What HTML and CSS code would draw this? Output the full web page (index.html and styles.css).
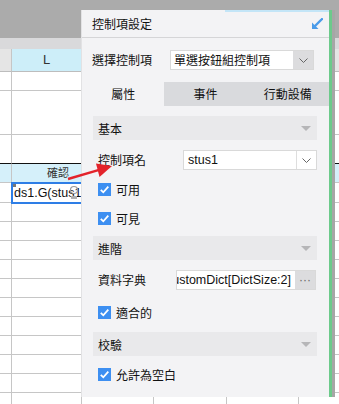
FILE: index.html
```html
<!doctype html>
<html lang="zh-Hant">
<head>
  <meta charset="utf-8">
  <title>控制項設定</title>
  <link rel="stylesheet" href="styles.css">
</head>
<body>

  <div class="sheet">
    <div class="topbar"></div>
    <div class="strip"></div>
    <div class="row head">
      <div class="cell rh"></div><div class="cell l">L</div><div class="cell"></div><div class="cell w73"></div><div class="cell"></div><div class="cell"></div>
    </div>
    <div class="row"><div class="cell rh"></div><div class="cell l"></div><div class="cell"></div><div class="cell w73"></div><div class="cell"></div><div class="cell"></div></div>
    <div class="row tall"><div class="cell rh"></div><div class="cell l"></div><div class="cell"></div><div class="cell w73"></div><div class="cell"></div><div class="cell"></div></div>
    <div class="row mid dark"><div class="cell rh"></div><div class="cell l"></div><div class="cell"></div><div class="cell w73"></div><div class="cell"></div><div class="cell"></div></div>
    <div class="row caption"><div class="cell rh"></div><div class="cell l">確認</div><div class="cell"></div><div class="cell w73"></div><div class="cell"></div><div class="cell"></div></div>
    <div class="row current">
      <div class="cell rh"></div>
      <div class="cell l">
        <div class="editor">
          <span class="pen"></span>
          <span class="formula">ds1.G(stus1</span>
          <svg class="mark" width="10" height="16" viewBox="0 0 10 16">
            <circle cx="5" cy="5" r="3.5" fill="none" stroke="#9a9a9a" stroke-width="1.2"/>
            <rect x="2" y="11" width="6" height="3" fill="#b0b0b0"/>
          </svg>
        </div>
      </div>
      <div class="cell"></div><div class="cell w73"></div><div class="cell"></div><div class="cell"></div>
    </div>
    <div class="row"><div class="cell rh"></div><div class="cell l"></div><div class="cell"></div><div class="cell w73"></div><div class="cell"></div><div class="cell"></div></div>
    <div class="row"><div class="cell rh"></div><div class="cell l"></div><div class="cell"></div><div class="cell w73"></div><div class="cell"></div><div class="cell"></div></div>
    <div class="row"><div class="cell rh"></div><div class="cell l"></div><div class="cell"></div><div class="cell w73"></div><div class="cell"></div><div class="cell"></div></div>
    <div class="row"><div class="cell rh"></div><div class="cell l"></div><div class="cell"></div><div class="cell w73"></div><div class="cell"></div><div class="cell"></div></div>
    <div class="row"><div class="cell rh"></div><div class="cell l"></div><div class="cell"></div><div class="cell w73"></div><div class="cell"></div><div class="cell"></div></div>
    <div class="row"><div class="cell rh"></div><div class="cell l"></div><div class="cell"></div><div class="cell w73"></div><div class="cell"></div><div class="cell"></div></div>
    <div class="row"><div class="cell rh"></div><div class="cell l"></div><div class="cell"></div><div class="cell w73"></div><div class="cell"></div><div class="cell"></div></div>
    <div class="row"><div class="cell rh"></div><div class="cell l"></div><div class="cell"></div><div class="cell w73"></div><div class="cell"></div><div class="cell"></div></div>
    <div class="row"><div class="cell rh"></div><div class="cell l"></div><div class="cell"></div><div class="cell w73"></div><div class="cell"></div><div class="cell"></div></div>
    <div class="row"><div class="cell rh"></div><div class="cell l"></div><div class="cell"></div><div class="cell w73"></div><div class="cell"></div><div class="cell"></div></div>
    <div class="row"><div class="cell rh"></div><div class="cell l"></div><div class="cell"></div><div class="cell w73"></div><div class="cell"></div><div class="cell"></div></div>
  </div>

  <div class="panel">
    <div class="title">
      <span>控制項設定</span>
      <svg class="dock" width="12" height="12" viewBox="0 0 12 12">
        <path d="M11 1 L4 8" stroke="#4a9be9" stroke-width="2.4" stroke-linecap="round"/>
        <polygon points="1,11 1,4.5 7.5,11" fill="#4a9be9"/>
      </svg>
    </div>

    <div class="pick">
      <span class="pick-label">選擇控制項</span>
      <div class="select">
        <span class="val">單選按鈕組控制項</span>
        <span class="btn grey">
          <svg width="9" height="5" viewBox="0 0 9 5"><path d="M0.5 0.5 L4.5 4.5 L8.5 0.5" fill="none" stroke="#666" stroke-width="1"/></svg>
        </span>
      </div>
    </div>

    <div class="tabs">
      <div class="tab on">屬性</div>
      <div class="tab">事件</div>
      <div class="tab">行動設備</div>
    </div>

    <div class="props">
      <div class="group">基本<i class="caret"></i></div>

      <div class="field">
        <span class="flabel wide">控制項名</span>
        <div class="input">
          <span class="val">stus1</span>
          <span class="btn white">
            <svg width="9" height="5" viewBox="0 0 9 5"><path d="M0.5 0.5 L4.5 4.5 L8.5 0.5" fill="none" stroke="#666" stroke-width="1"/></svg>
          </span>
        </div>
      </div>

      <div class="check first"><span class="box"><svg width="13" height="13" viewBox="0 0 13 13"><path d="M2.8 6.8 L5.3 9.3 L10.3 3.6" fill="none" stroke="#fff" stroke-width="1.8"/></svg></span>可用</div>
      <div class="check next"><span class="box"><svg width="13" height="13" viewBox="0 0 13 13"><path d="M2.8 6.8 L5.3 9.3 L10.3 3.6" fill="none" stroke="#fff" stroke-width="1.8"/></svg></span>可見</div>

      <div class="group after-check">進階<i class="caret"></i></div>

      <div class="field">
        <span class="flabel">資料字典</span>
        <div class="input dict">
          <span class="val scrolled"><span>CustomDict[DictSize:2]</span></span>
          <span class="btn grey dots">···</span>
        </div>
      </div>

      <div class="check next"><span class="box"><svg width="13" height="13" viewBox="0 0 13 13"><path d="M2.8 6.8 L5.3 9.3 L10.3 3.6" fill="none" stroke="#fff" stroke-width="1.8"/></svg></span>適合的</div>

      <div class="group after-check2">校驗<i class="caret"></i></div>

      <div class="check last"><span class="box"><svg width="13" height="13" viewBox="0 0 13 13"><path d="M2.8 6.8 L5.3 9.3 L10.3 3.6" fill="none" stroke="#fff" stroke-width="1.8"/></svg></span>允許為空白</div>
    </div>
  </div>

  <svg class="pointer" width="339" height="404" viewBox="0 0 339 404">
    <line x1="68" y1="179" x2="100" y2="169.6" stroke="#e3232b" stroke-width="2.4"/>
    <polygon points="112,166 96,163.5 99.5,177" fill="#e3232b"/>
  </svg>

</body>
</html>
```

FILE: styles.css
```css
* {
  box-sizing: border-box;
}
body {
  margin: 0;
  width: 339px;
  height: 404px;
  overflow: hidden;
  position: relative;
  background: #fff;
  color: #111;
  font-family: "Liberation Sans", "Noto Sans CJK TC", sans-serif;
  font-size: 12px;
}

/* spreadsheet behind the panel */
.sheet {
  width: 339px;
  height: 404px;
  overflow: hidden;
}
.topbar {
  height: 38px;
  background: #ababab;
}
.strip {
  height: 11px;
  background: #d9d9db;
}
.row {
  display: flex;
  height: 19px;
}
.row.head {
  height: 23px;
}
.row.tall {
  height: 44px;
}
.row.mid {
  height: 29px;
}
.row.current {
  height: 20px;
}
.cell {
  flex: none;
  width: 72px;
  border-right: 1px solid #c6c6c6;
  border-bottom: 1px solid #c6c6c6;
}
.cell.rh {
  width: 12px;
}
.cell.l {
  width: 70px;
}
.cell.w73 {
  width: 73px;
}
.head .cell {
  background: #e5e5e5;
  border-bottom-color: #bdbdbd;
}
.head .cell.l {
  background: #cdeef9;
  text-align: center;
  line-height: 22px;
  font-size: 13px;
  color: #333;
}
.dark .cell {
  border-bottom-color: #111;
}
.caption .cell {
  background: #d5f0fa;
}
.caption .cell.l {
  padding-left: 35px;
  font-size: 11px;
  line-height: 18px;
  color: #333;
}
.current .cell.l {
  position: relative;
}
.editor {
  position: absolute;
  left: -1px;
  top: -1px;
  width: 74px;
  height: 22px;
  border: 2px solid #2e7ee6;
  background: #fff;
  overflow: hidden;
  white-space: nowrap;
}
.formula {
  display: block;
  padding-left: 1px;
  font-size: 12.5px;
  line-height: 18px;
  color: #111;
}
.pen {
  position: absolute;
  left: 0;
  top: 0;
  width: 3px;
  height: 3px;
  background: #777;
}
.mark {
  position: absolute;
  left: 56px;
  top: 1px;
}

/* floating settings panel */
.panel {
  position: absolute;
  left: 81px;
  top: 10px;
  width: 251px;
  height: 387px;
  background: #f3f3f5;
  border-left: 1px solid #e2e2e4;
  border-right: 3px solid #6cca8b;
  box-shadow: 3px 0 0 #a6a6a6;
  font-family: "Noto Sans CJK TC", sans-serif;
}
.title {
  height: 28px;
  padding: 0 6px 0 10px;
  display: flex;
  align-items: center;
  justify-content: space-between;
  border-bottom: 1px solid #d5d5d7;
  background: linear-gradient(to right, transparent 143px, #c3e5f7 143px) top / 100% 2px no-repeat;
  font-size: 12px;
  line-height: 14px;
}
.pick {
  height: 44px;
  padding: 12px 0 0 10px;
  display: flex;
  align-items: flex-start;
}
.pick-label {
  width: 78px;
  line-height: 20px;
}
.select,
.input {
  display: flex;
  height: 20px;
  background: #fff;
  border: 1px solid #d9d9d9;
}
.select {
  width: 144px;
}
.val {
  flex: 1;
  min-width: 0;
  padding-left: 3px;
  line-height: 18px;
  overflow: hidden;
  white-space: nowrap;
}
.btn {
  flex: none;
  width: 20px;
  display: flex;
  align-items: center;
  justify-content: center;
}
.btn.grey {
  background: #dcdcde;
}
.btn.white {
  border-left: 1px solid #dedede;
}
.tabs {
  display: flex;
  height: 24px;
  background: #d9dadd;
}
.tab {
  flex: 1;
  text-align: center;
  line-height: 24px;
}
.tab.on {
  background: #f3f3f5;
}
.props {
  padding: 10px 12px 0 11px;
}
.group {
  height: 24px;
  padding: 0 6px 0 5px;
  display: flex;
  align-items: center;
  justify-content: space-between;
  background: #e9e9eb;
}
.caret {
  width: 0;
  height: 0;
  border-left: 5px solid transparent;
  border-right: 5px solid transparent;
  border-top: 5px solid #b6b6b8;
}
.group.after-check {
  margin-top: 11px;
}
.group.after-check2 {
  margin-top: 13px;
}
.field {
  display: flex;
  margin-top: 10px;
  height: 20px;
}
.flabel {
  flex: none;
  width: 83px;
  padding-left: 5px;
  line-height: 20px;
}
.flabel.wide {
  width: 90px;
}
.field .input {
  flex: 1;
  min-width: 0;
}
.field .input .val {
  font-family: "Liberation Sans", sans-serif;
  font-size: 12.5px;
  padding-left: 4px;
}
.input.dict {
  margin-right: 1px;
}
.val.scrolled {
  display: flex;
  justify-content: flex-end;
  padding-right: 4px;
}
.val.scrolled span {
  flex: none;
}
.dots {
  font-family: "Liberation Sans", sans-serif;
  font-size: 12px;
  color: #666;
}
.check {
  display: flex;
  align-items: center;
  height: 13px;
  padding-left: 5px;
  line-height: 13px;
}
.check.first {
  margin-top: 13px;
}
.check.next {
  margin-top: 16px;
}
.check.last {
  margin-top: 12px;
}
.box {
  flex: none;
  width: 13px;
  height: 13px;
  margin-right: 5px;
  background: #3d8ff1;
}
.box svg {
  display: block;
}

/* red annotation arrow */
.pointer {
  position: absolute;
  left: 0;
  top: 0;
  pointer-events: none;
}
```
